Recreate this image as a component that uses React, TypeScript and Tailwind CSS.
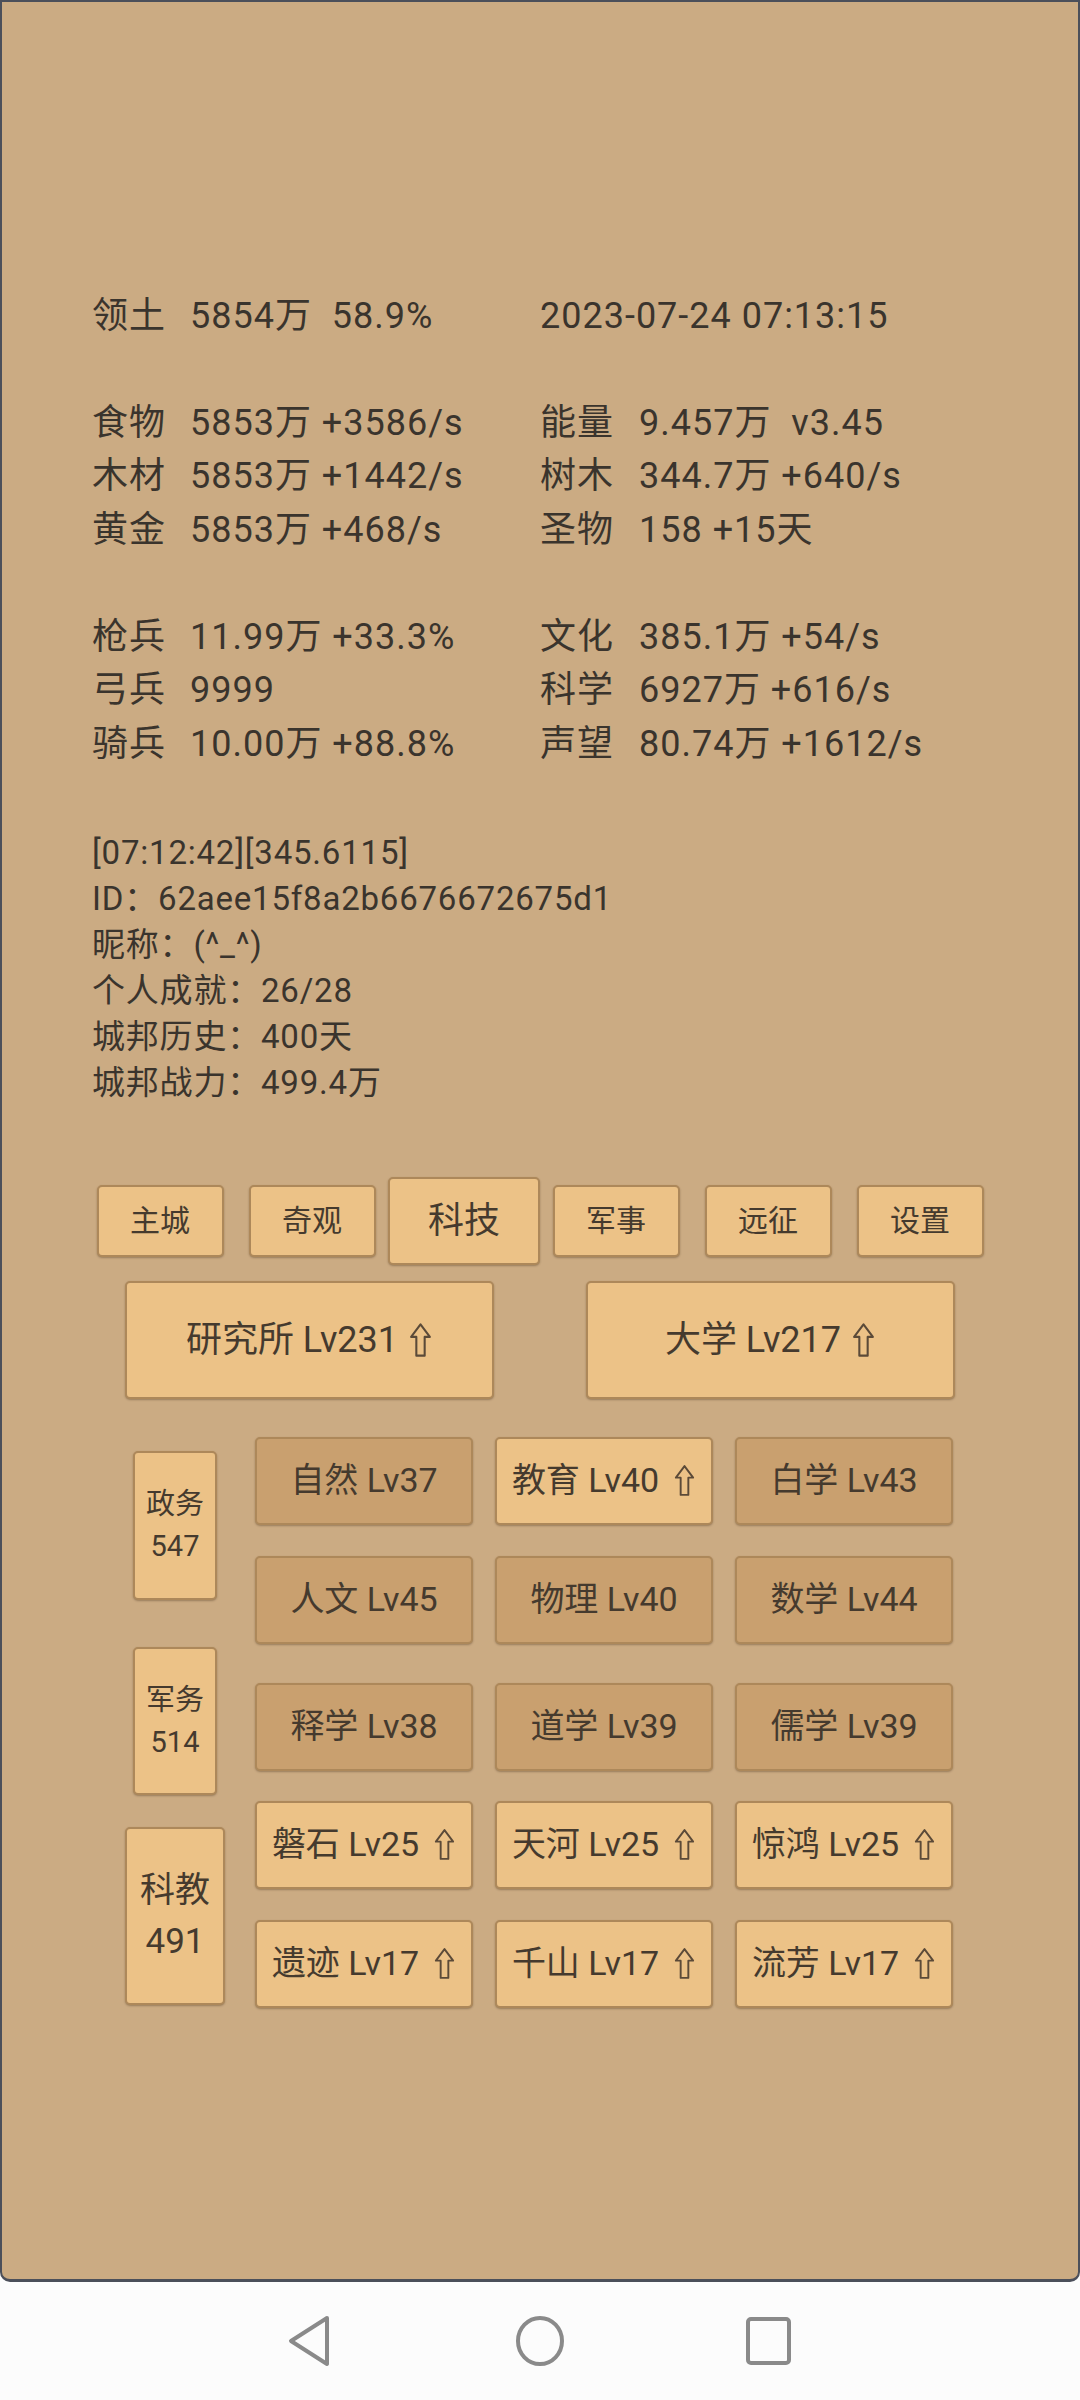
import React from 'react';

type Cell = { name: string; lv: number; up: boolean };

const statRows: [string, string, string, string][] = [
  ['食物', '5853万 +3586/s', '能量', '9.457万  v3.45'],
  ['木材', '5853万 +1442/s', '树木', '344.7万 +640/s'],
  ['黄金', '5853万 +468/s', '圣物', '158 +15天'],
];

const armyRows: [string, string, string, string][] = [
  ['枪兵', '11.99万 +33.3%', '文化', '385.1万 +54/s'],
  ['弓兵', '9999', '科学', '6927万 +616/s'],
  ['骑兵', '10.00万 +88.8%', '声望', '80.74万 +1612/s'],
];

const infoLines = [
  '[07:12:42][345.6115]',
  'ID：62aee15f8a2b6676672675d1',
  '昵称：(^_^)',
  '个人成就：26/28',
  '城邦历史：400天',
  '城邦战力：499.4万',
];

const tabs = ['主城', '奇观', '科技', '军事', '远征', '设置'];

const grid: { cells: Cell[]; mt: string }[] = [
  {
    mt: 'mt-0',
    cells: [
      { name: '自然', lv: 37, up: false },
      { name: '教育', lv: 40, up: true },
      { name: '白学', lv: 43, up: false },
    ],
  },
  {
    mt: 'mt-[31px]',
    cells: [
      { name: '人文', lv: 45, up: false },
      { name: '物理', lv: 40, up: false },
      { name: '数学', lv: 44, up: false },
    ],
  },
  {
    mt: 'mt-[39px]',
    cells: [
      { name: '释学', lv: 38, up: false },
      { name: '道学', lv: 39, up: false },
      { name: '儒学', lv: 39, up: false },
    ],
  },
  {
    mt: 'mt-[30px]',
    cells: [
      { name: '磐石', lv: 25, up: true },
      { name: '天河', lv: 25, up: true },
      { name: '惊鸿', lv: 25, up: true },
    ],
  },
  {
    mt: 'mt-[31px]',
    cells: [
      { name: '遗迹', lv: 17, up: true },
      { name: '千山', lv: 17, up: true },
      { name: '流芳', lv: 17, up: true },
    ],
  },
];

const btnBase =
  'flex items-center justify-center rounded-[5px] border-2 border-[#ad885a] shadow-[0_1px_2px_rgba(60,40,20,0.35)] text-[#453a2e]';

const UpArrow = ({ className }: { className: string }) => (
  <svg viewBox="0 0 24 34" className={className} fill="none" stroke="#5b4a38" strokeWidth="2" strokeLinejoin="round">
    <path d="M12 2 L21 14 H16 V32 H8 V14 H3 Z" />
  </svg>
);

const StatRow = ({ row }: { row: [string, string, string, string] }) => (
  <div className="flex h-[53.5px] items-center">
    <span className="w-[98px]">{row[0]}</span>
    <span className="w-[350px] whitespace-pre">{row[1]}</span>
    <span className="w-[99px]">{row[2]}</span>
    <span className="whitespace-pre">{row[3]}</span>
  </div>
);

export default function App() {
  return (
    <div className="flex h-[2400px] w-[1080px] flex-col bg-[#fcfcfc] font-['Roboto','Noto_Sans_CJK_SC',sans-serif]">
      <div className="flex h-[2282px] flex-col rounded-b-[10px] border-2 border-b-[3px] border-[#4b4f5a] bg-[#cbab83] pt-[287px] text-[#3a342d]">
        {/* resource block */}
        <div className="pl-[90px] text-[36px] tracking-[1px]">
          <div className="flex h-[53.5px] items-center">
            <span className="w-[98px]">领土</span>
            <span className="w-[350px] whitespace-pre">5854万  58.9%</span>
            <span>2023-07-24 07:13:15</span>
          </div>
          <div className="h-[53.5px]" />
          {statRows.map(r => (
            <StatRow key={r[0]} row={r} />
          ))}
          <div className="h-[53.5px]" />
          {armyRows.map(r => (
            <StatRow key={r[0]} row={r} />
          ))}
        </div>

        {/* player info */}
        <div className="mt-[59px] pl-[90px] text-[33px] tracking-[0.8px]">
          {infoLines.map(l => (
            <div key={l} className="flex h-[46px] items-center">
              {l}
            </div>
          ))}
        </div>

        {/* tabs */}
        <div className="ml-[82px] mt-[71px] grid h-[88px] w-[912px] grid-cols-6 items-center">
          {tabs.map(t => (
            <div key={t} className="flex justify-center">
              {t === '科技' ? (
                <div className={`${btnBase} h-[88px] w-[152px] bg-[#ecc287] text-[36px]`}>{t}</div>
              ) : (
                <div className={`${btnBase} h-[72px] w-[127px] bg-[#ecc287] text-[30px]`}>{t}</div>
              )}
            </div>
          ))}
        </div>

        {/* buildings */}
        <div className="ml-[123px] mt-[16px] flex gap-[92px]">
          <div className={`${btnBase} h-[118px] w-[369px] gap-[10px] bg-[#ecc287] text-[36px]`}>
            <span className="whitespace-pre">研究所 Lv231</span>
            <UpArrow className="h-[36px] w-[25px]" />
          </div>
          <div className={`${btnBase} h-[118px] w-[369px] gap-[10px] bg-[#ecc287] text-[36px]`}>
            <span className="whitespace-pre">大学 Lv217</span>
            <UpArrow className="h-[36px] w-[25px]" />
          </div>
        </div>

        {/* tech tree */}
        <div className="ml-[123px] mt-[38px] flex gap-[30px]">
          <div className="flex w-[100px] flex-col items-center pt-[14px]">
            <div className={`${btnBase} h-[149px] w-[84px] flex-col bg-[#ecc287] text-[29px] leading-[42px]`}>
              <span>政务</span>
              <span>547</span>
            </div>
            <div className={`${btnBase} mt-[47px] h-[148px] w-[84px] flex-col bg-[#ecc287] text-[29px] leading-[42px]`}>
              <span>军务</span>
              <span>514</span>
            </div>
            <div className={`${btnBase} mt-[32px] h-[178px] w-[100px] flex-col bg-[#ecc287] text-[35px] leading-[51px]`}>
              <span>科教</span>
              <span>491</span>
            </div>
          </div>
          <div className="flex flex-col">
            {grid.map((row, i) => (
              <div key={i} className={`flex gap-[22px] ${row.mt}`}>
                {row.cells.map(c => (
                  <div
                    key={c.name}
                    className={`${btnBase} h-[88px] w-[218px] gap-[14px] text-[34px] ${c.up ? 'bg-[#ecc287]' : 'bg-[#c9a06f]'}`}
                  >
                    <span className="whitespace-pre">{`${c.name} Lv${c.lv}`}</span>
                    {c.up && <UpArrow className="h-[33px] w-[23px]" />}
                  </div>
                ))}
              </div>
            ))}
          </div>
        </div>
      </div>

      {/* android nav bar */}
      <div className="flex flex-1 items-center">
        <svg width="1080" height="118" viewBox="0 0 1080 118">
          <g fill="none" stroke="#8a8a8a" strokeWidth="4" strokeLinejoin="round">
            <path d="M327 36 L291 59 L327 82 Z" />
            <ellipse cx="540" cy="59" rx="22" ry="23" />
            <rect x="748" y="37" width="41" height="44" rx="3" />
          </g>
        </svg>
      </div>
    </div>
  );
}
